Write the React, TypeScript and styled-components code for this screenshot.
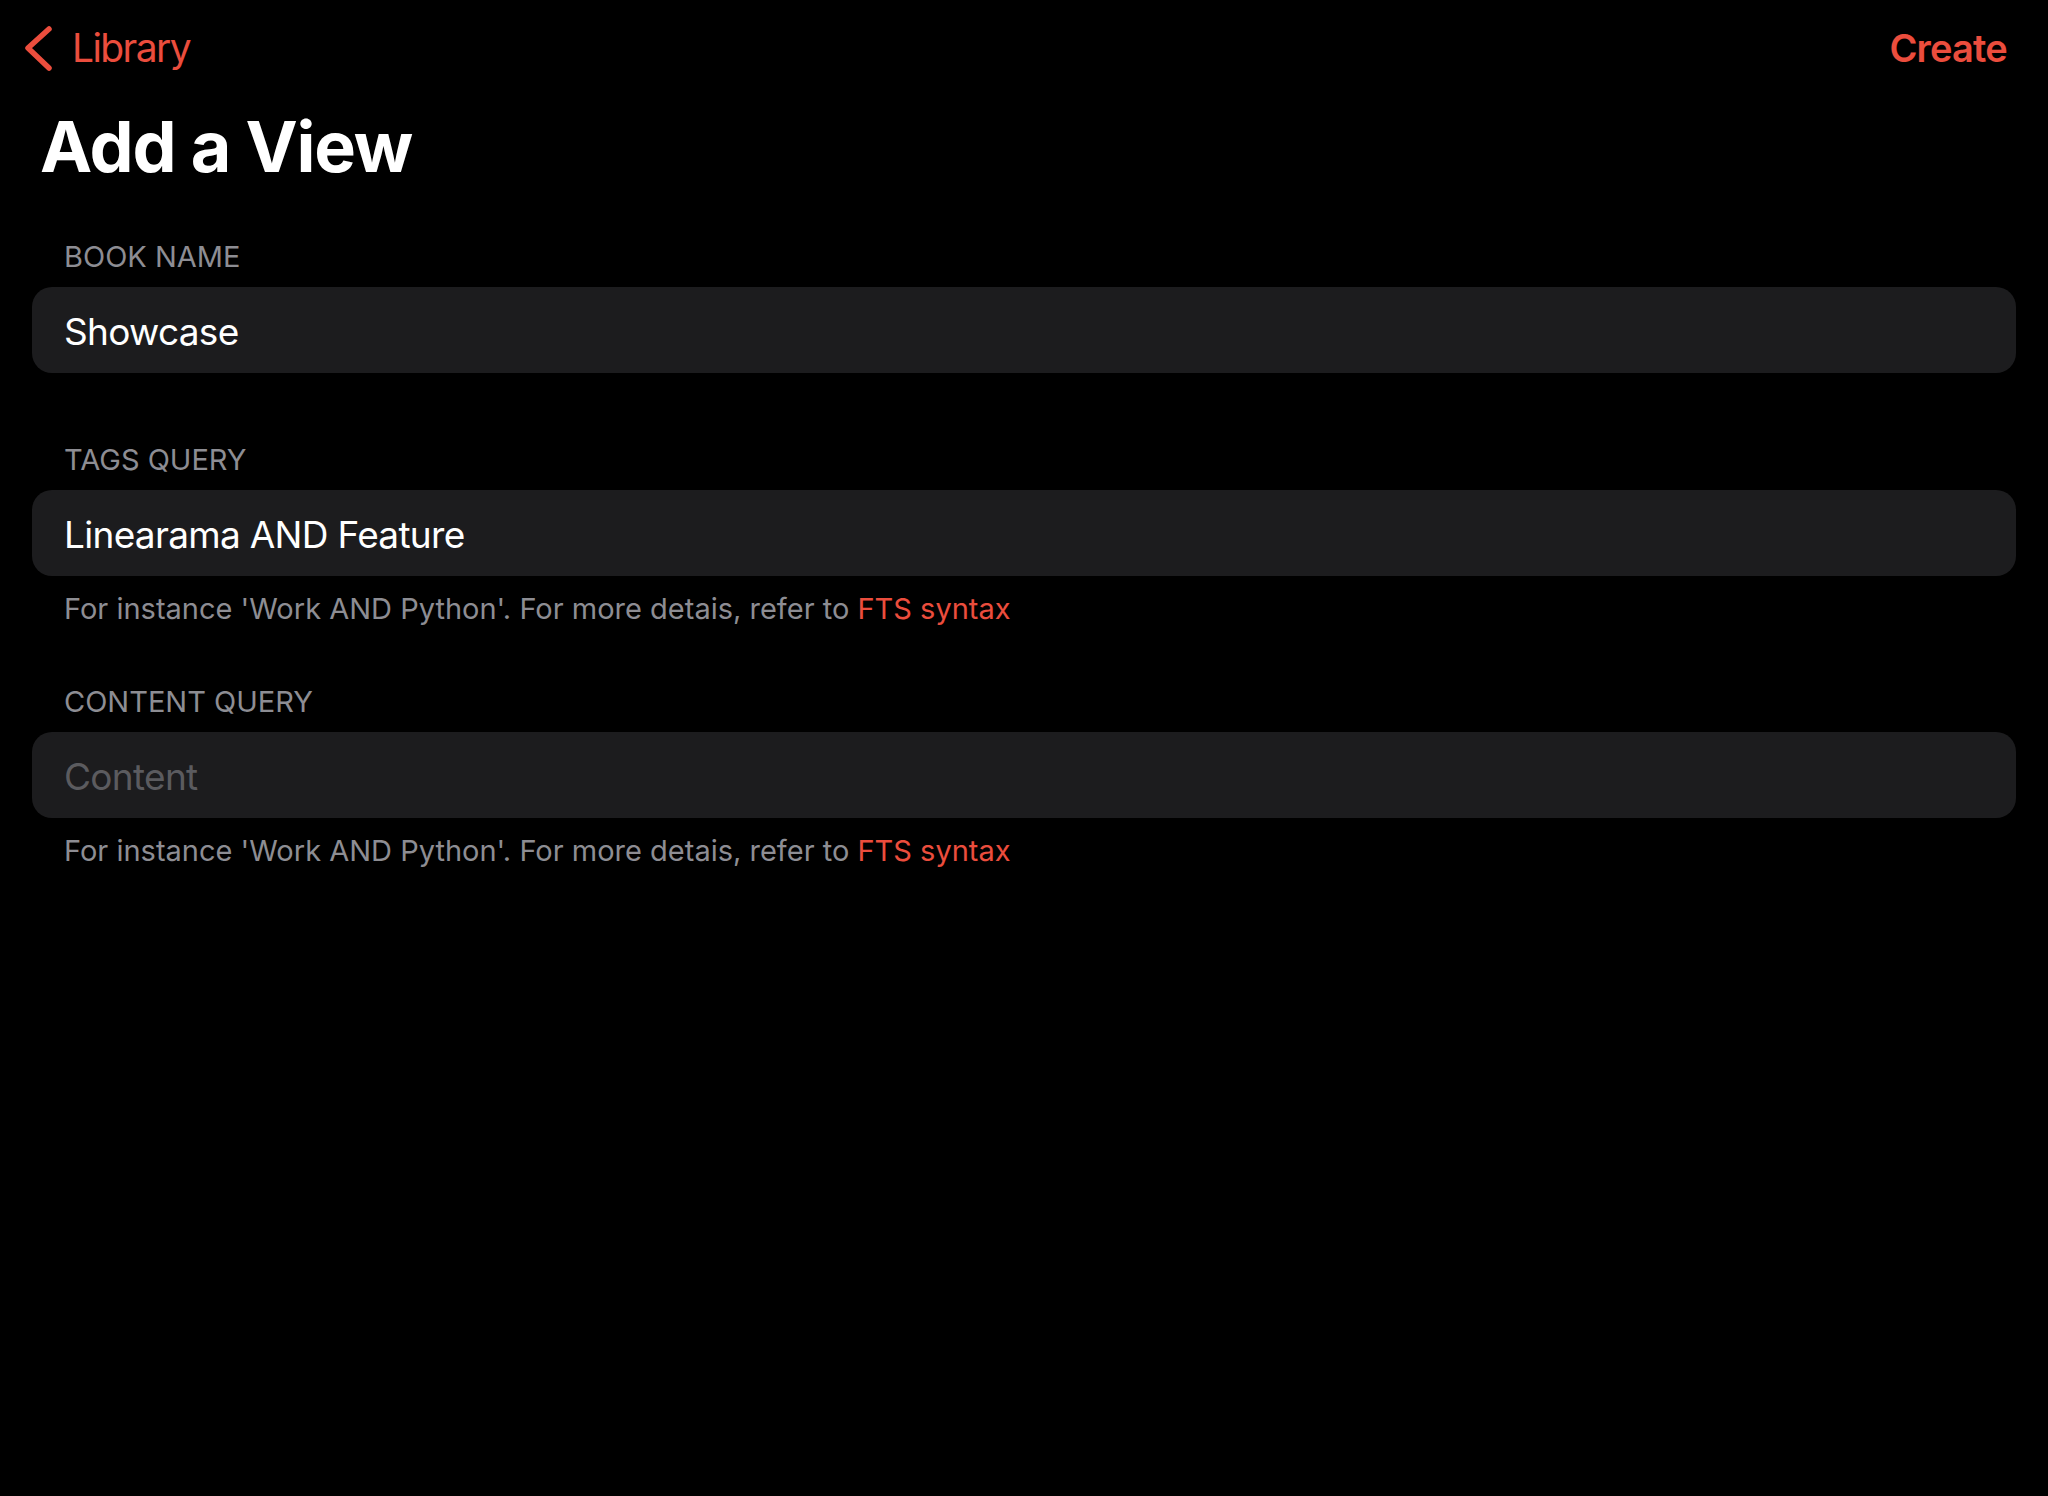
import React from "react";
import styled, { createGlobalStyle } from "styled-components";

const GlobalStyle = createGlobalStyle`
  html, body {
    margin: 0;
    padding: 0;
    background: #000;
  }
  body {
    font-family: Inter, "Noto Sans", "Liberation Sans", sans-serif;
    -webkit-font-smoothing: antialiased;
  }
  * { box-sizing: border-box; }
`;

const ACCENT = "#EB4D3D";

const Page = styled.div`
  min-height: 1496px;
  width: 2048px;
  background: #000;
  color: #fff;
  display: flex;
  flex-direction: column;
`;

const NavBar = styled.header`
  height: 96px;
  display: flex;
  align-items: center;
  justify-content: space-between;
  padding: 0 41px 0 23px;
`;

const BackButton = styled.button`
  display: flex;
  align-items: center;
  gap: 17px;
  background: none;
  border: none;
  padding: 0;
  color: ${ACCENT};
  font-family: inherit;
  font-size: 39px;
  line-height: 48px;
  font-weight: 400;
  letter-spacing: -1.6px;
  cursor: pointer;
`;

const ActionButton = styled.button`
  background: none;
  border: none;
  padding: 0;
  color: ${ACCENT};
  font-family: inherit;
  font-size: 38px;
  line-height: 48px;
  font-weight: 600;
  letter-spacing: -0.8px;
  cursor: pointer;
`;

const Title = styled.h1`
  margin: 16px 0 0;
  padding-left: 40px;
  font-size: 70px;
  line-height: 70px;
  font-weight: 700;
  letter-spacing: -1.2px;
`;

const Form = styled.div`
  display: flex;
  flex-direction: column;
  padding: 0 32px;
  margin-top: 57px;
`;

const Section = styled.section<{ $spaceTop: number }>`
  display: flex;
  flex-direction: column;
  margin-top: ${(p) => p.$spaceTop}px;
`;

const Label = styled.div`
  padding-left: 32px;
  font-size: 29px;
  line-height: 36px;
  color: #8d8d93;
  text-transform: uppercase;
  margin-bottom: 12px;
`;

const Field = styled.input`
  height: 86px;
  width: 100%;
  border: none;
  outline: none;
  border-radius: 20px;
  background: #1c1c1e;
  padding: 2px 32px 0;
  font-family: inherit;
  font-size: 37px;
  line-height: 84px;
  letter-spacing: -0.7px;
  color: #fff;
  &::placeholder {
    color: #5b5b5f;
  }
`;

const Helper = styled.div`
  padding-left: 32px;
  margin-top: 15px;
  font-size: 29px;
  line-height: 36px;
  color: #8d8d93;
`;

const Link = styled.a`
  color: ${ACCENT};
  text-decoration: none;
`;

const Chevron = () => (
  <svg width="32" height="48" viewBox="0 0 32 48" fill="none">
    <path
      d="M26 5 L5 24 L26 44"
      stroke={ACCENT}
      strokeWidth="5.5"
      strokeLinecap="round"
      strokeLinejoin="round"
    />
  </svg>
);

const HelpText = () => (
  <Helper>
    For instance 'Work AND Python'. For more detais, refer to{" "}
    <Link href="#">FTS syntax</Link>
  </Helper>
);

export default function App() {
  return (
    <>
      <GlobalStyle />
      <Page>
        <NavBar>
          <BackButton>
            <Chevron />
            Library
          </BackButton>
          <ActionButton>Create</ActionButton>
        </NavBar>
        <Title>Add a View</Title>
        <Form>
          <Section $spaceTop={0}>
            <Label>Book Name</Label>
            <Field readOnly defaultValue="Showcase" />
          </Section>
          <Section $spaceTop={69}>
            <Label>Tags Query</Label>
            <Field readOnly defaultValue="Linearama AND Feature" />
            <HelpText />
          </Section>
          <Section $spaceTop={57}>
            <Label>Content Query</Label>
            <Field readOnly placeholder="Content" />
            <HelpText />
          </Section>
        </Form>
      </Page>
    </>
  );
}
